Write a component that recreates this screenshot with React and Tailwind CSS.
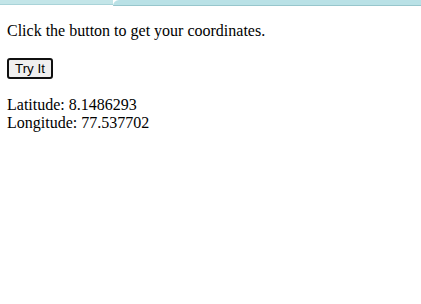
import React from 'react';

export default function App() {
  return (
    <div className="min-h-screen bg-white text-black" style={{ fontFamily: '"Liberation Serif", "Times New Roman", serif' }}>
      {/* Top strip */}
      <div className="flex h-[6px]">
        <div className="w-[113px] h-[5px] bg-[#c3e5e8] border-b border-[#a9d3d8]" />
        <div className="flex-1 bg-[#b9e1e6] border-b border-[#97c6cc] rounded-tl-[6px]" />
      </div>

      <div className="px-[7px]">
        <p className="mt-[16px] mb-[16px] text-[16px] leading-[18px]">Click the button to get your coordinates.</p>

        <button
          className="h-[21px] px-[6px] border-2 border-[#101010] rounded-[3px] bg-[#efefef] text-[13.33px] leading-none text-black"
          style={{ fontFamily: '"Liberation Sans", Arial, sans-serif' }}
        >
          Try It
        </button>

        <p className="mt-[16px] text-[16px] leading-[18px]">
          Latitude: 8.1486293
          <br />
          Longitude: 77.537702
        </p>
      </div>
    </div>
  );
}
